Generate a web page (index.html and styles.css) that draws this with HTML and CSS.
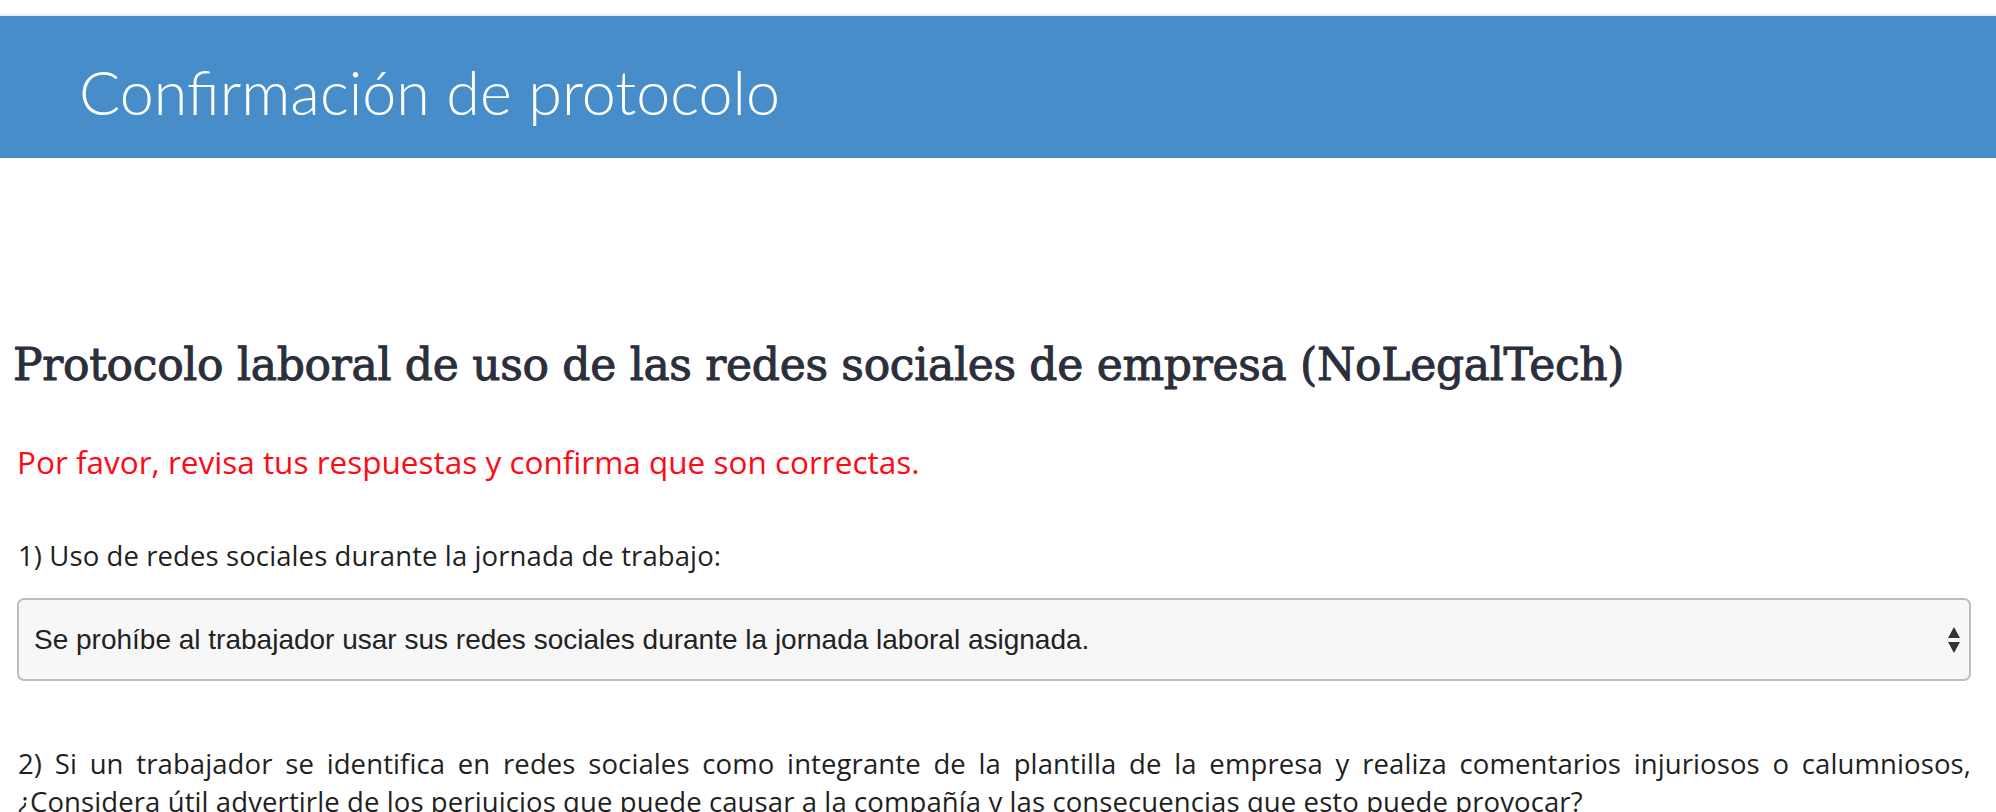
FILE: index.html
```html
<!DOCTYPE html>
<html lang="es">
<head>
<meta charset="utf-8">
<title>Confirmación de protocolo</title>
<link rel="stylesheet" href="styles.css">
</head>
<body>
<header class="topbar">
  <h1 class="topbar-title">Confirmación de protocolo</h1>
</header>
<main class="content">
  <h2 class="doc-title">Protocolo laboral de uso de las redes sociales de empresa (NoLegalTech)</h2>
  <p class="notice">Por favor, revisa tus respuestas y confirma que son correctas.</p>
  <section class="question">
    <p class="q-label">1) Uso de redes sociales durante la jornada de trabajo:</p>
    <div class="select">
      <span class="select-value">Se prohíbe al trabajador usar sus redes sociales durante la jornada laboral asignada.</span>
      <svg class="select-arrows" width="12" height="26" viewBox="0 0 12 26" aria-hidden="true">
        <path d="M6 0 L12 11 L0 11 Z" fill="#333"/>
        <path d="M0 15 L12 15 L6 26 Z" fill="#333"/>
      </svg>
    </div>
  </section>
  <section class="question q-second">
    <p class="q-label q-justify">2) Si un trabajador se identifica en redes sociales como integrante de la plantilla de la empresa y realiza comentarios injuriosos o calumniosos, ¿Considera útil advertirle de los perjuicios que puede causar a la compañía y las consecuencias que esto puede provocar?</p>
  </section>
</main>
</body>
</html>
```

FILE: styles.css
```css
html, body {
  margin: 0;
  padding: 0;
  background: #ffffff;
}

body {
  font-family: "Open Sans", "Lato", sans-serif;
  color: #1f1f1f;
  overflow: hidden;
}

.topbar {
  margin-top: 14px;
  border-top: 2px solid #f1f1f1;
  height: 142px;
  background: #468dc9;
  display: flex;
  align-items: center;
  padding-left: 79px;
}

.topbar-title {
  margin: 0;
  font-family: "Lato", sans-serif;
  font-weight: 300;
  font-size: 61px;
  line-height: 1;
  color: #ffffff;
  position: relative;
  top: 4px;
}

.content {
  padding: 0 25px 0 17px;
  display: flex;
  flex-direction: column;
}

.doc-title {
  margin: 179px 0 0 -4px;
  font-family: "DejaVu Serif", serif;
  font-weight: 400;
  font-size: 44px;
  letter-spacing: -0.3px;
  line-height: 56px;
  color: #2b2f3b;
  -webkit-text-stroke: 1px #2b2f3b;
  white-space: nowrap;
}

.notice {
  margin: 51px 0 0 0;
  font-size: 31.5px;
  line-height: 36px;
  color: #ff0a14;
}

.question {
  display: flex;
  flex-direction: column;
}

.q-label {
  margin: 60px 0 0 1px;
  font-size: 27.5px;
  letter-spacing: 0.1px;
  line-height: 32px;
  color: #1f1f1f;
}

.select {
  margin-top: 26px;
  height: 83px;
  box-sizing: border-box;
  border: 2px solid #bdbdbd;
  border-radius: 7px;
  background: #f7f7f7;
  display: flex;
  align-items: center;
  justify-content: space-between;
  padding: 0 9px 0 15px;
}

.select-value {
  font-family: "Liberation Sans", Arial, sans-serif;
  font-size: 28px;
  color: #222222;
}

.select-arrows {
  display: block;
  flex: none;
}

.q-second .q-label {
  margin-top: 64px;
  line-height: 38px;
}

.q-justify {
  text-align: justify;
}
```
